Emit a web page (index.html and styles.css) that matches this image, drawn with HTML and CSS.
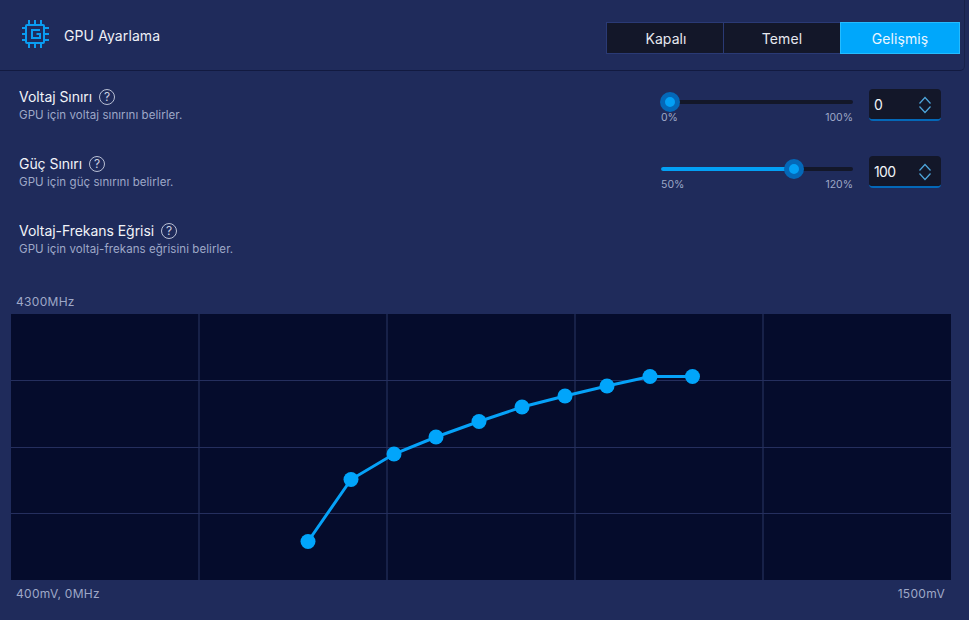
FILE: index.html
```html
<!DOCTYPE html>
<html lang="tr">
<head>
<meta charset="utf-8">
<title>GPU Ayarlama</title>
<link rel="stylesheet" href="styles.css">
</head>
<body>
<header class="head">
  <div class="head-title">
    <svg class="chip" width="30" height="30" viewBox="0 0 30 30" fill="none" stroke="#0a9df2" stroke-width="2">
      <rect x="5" y="5" width="18" height="18" rx="1"/>
      <path d="M8 0v4M14 0v4M20 0v4M8 24v4M14 24v4M20 24v4M1 8h3M1 14h3M1 20h3M24 8h4M24 14h4M24 20h4"/>
      <path d="M19 10H11V18H19V14H15.500"/>
    </svg>
    <span>GPU Ayarlama</span>
  </div>
  <div class="tabs">
    <div class="tab first">Kapalı</div>
    <div class="tab">Temel</div>
    <div class="tab active">Gelişmiş</div>
  </div>
</header>
<main class="body">
  <section class="row">
    <div class="info">
      <div class="label">Voltaj Sınırı <span class="help">?</span></div>
      <div class="desc">GPU için voltaj sınırını belirler.</div>
    </div>
    <div class="ctrl">
      <div class="slider">
        <div class="track"><div class="fill" style="width:0"></div><div class="knob" style="left:-1px"></div></div>
        <div class="ends"><span>0%</span><span>100%</span></div>
      </div>
      <div class="spin"><span>0</span>
        <svg class="arrows" width="12" height="18" viewBox="0 0 12 18" fill="none" stroke="#4ea6dc" stroke-width="1.200"><path d="M.5 7.500L6 1.500l5.500 6M.5 10.500L6 16.500l5.500-6"/></svg>
      </div>
    </div>
  </section>
  <section class="row">
    <div class="info">
      <div class="label">Güç Sınırı <span class="help">?</span></div>
      <div class="desc">GPU için güç sınırını belirler.</div>
    </div>
    <div class="ctrl">
      <div class="slider">
        <div class="track"><div class="fill" style="width:133px"></div><div class="knob" style="left:123px"></div></div>
        <div class="ends"><span>50%</span><span>120%</span></div>
      </div>
      <div class="spin"><span>100</span>
        <svg class="arrows" width="12" height="18" viewBox="0 0 12 18" fill="none" stroke="#4ea6dc" stroke-width="1.200"><path d="M.5 7.500L6 1.500l5.500 6M.5 10.500L6 16.500l5.500-6"/></svg>
      </div>
    </div>
  </section>
  <section class="row">
    <div class="info">
      <div class="label">Voltaj-Frekans Eğrisi <span class="help">?</span></div>
      <div class="desc">GPU için voltaj-frekans eğrisini belirler.</div>
    </div>
  </section>
  <section class="curve">
    <div class="axis top">4300MHz</div>
    <svg class="plot" width="940" height="266" viewBox="0 0 940 266">
      <rect width="940" height="266" fill="#050c2c"/>
      <g stroke="#172148" stroke-width="2"><path d="M188 0v266M376 0v266M564 0v266M752 0v266"/></g>
      <g stroke="#252f5e" stroke-width="1"><path d="M0 66.500h940M0 133.500h940M0 199.500h940"/></g>
      <polyline fill="none" stroke="#06a2f8" stroke-width="3" points="297,227.500 340,165.500 383,140 425,123 468,107.500 511,93 554,82 596,72 639,62.500 681,62.500"/>
      <g fill="#01a5fb">
        <circle cx="297" cy="227.500" r="7.500"/><circle cx="340" cy="165.500" r="7.500"/><circle cx="383" cy="140" r="7.500"/><circle cx="425" cy="123" r="7.500"/><circle cx="468" cy="107.500" r="7.500"/><circle cx="511" cy="93" r="7.500"/><circle cx="554" cy="82" r="7.500"/><circle cx="596" cy="72" r="7.500"/><circle cx="639" cy="62.500" r="7.500"/><circle cx="681.500" cy="62.500" r="7.500"/>
      </g>
    </svg>
    <div class="axis bottom"><span>400mV, 0MHz</span><span>1500mV</span></div>
  </section>
</main>
</body>
</html>
```
FILE: styles.css
```css
* { box-sizing: border-box; }
html, body { margin: 0; height: 100%; }
body {
  width: 969px;
  height: 620px;
  overflow: hidden;
  background: #1f2b5b;
  color: #fff;
  font-family: Inter, "Liberation Sans", sans-serif;
}
.head {
  width: 965px;
  height: 71px;
  padding: 22px 4px 0 21px;
  border-bottom: 1px solid #121a40;
  border-right: 1px solid #18224a;
  border-bottom-right-radius: 5px;
  display: flex;
  justify-content: space-between;
  align-items: flex-start;
}
.head-title {
  display: flex;
  align-items: center;
  gap: 13px;
  font-size: 14px;
  letter-spacing: 0.1px;
  color: #eef0f6;
  height: 26px;
}
.tabs { display: flex; height: 32px; border: 1px solid #2a3a75; }
.tab {
  width: 117px;
  background: #131729;
  border-left: 1px solid #2a3a75;
  color: #e6e8ef;
  font-size: 14px;
  letter-spacing: 0.1px;
  display: flex;
  align-items: center;
  justify-content: center;
}
.tab.first { width: 116px; border-left: 0; padding-left: 2px; }
.tab.active { width: 120px; background: #00a7fb; border: 1px solid #25bcff; margin: -1px -1px -1px 0; height: 32px; color: #eaf6ff; }
.body { padding: 17px 28px 0 19px; }
.row {
  height: 67px;
  display: flex;
  justify-content: space-between;
  align-items: flex-start;
}
.label { font-size: 14px; line-height: 18px; letter-spacing: -0.05px; color: #f1f3f8; display: flex; align-items: center; gap: 7px; }
.help {
  width: 16px; height: 16px;
  border: 1px solid #b8bfd4;
  border-radius: 50%;
  font-size: 12px;
  line-height: 14px;
  text-align: center;
  color: #c9cee0;
  letter-spacing: 0;
}
.desc { font-size: 11.500px; line-height: 15px; margin-top: 2px; letter-spacing: 0.07px; color: #9ea8c7; }
.ctrl { display: flex; gap: 16px; align-items: flex-start; }
.slider { width: 192px; padding-top: 12px; }
.track { position: relative; height: 4px; background: #131729; border-radius: 2px; }
.fill { height: 4px; background: #03a0f5; border-radius: 2px; }
.knob {
  position: absolute;
  top: -8px;
  width: 20px; height: 20px;
  border-radius: 50%;
  background: #03a0f5;
  border: 5px solid #0468b8;
}
.ends { display: flex; justify-content: space-between; margin-top: 8px; font-size: 10.500px; line-height: 12px; color: #9ea8c7; }
.spin {
  width: 72px; height: 32px;
  margin-top: 1px;
  background: #131729;
  border-radius: 4px;
  border-bottom: 2px solid #0468b8;
  display: flex;
  justify-content: space-between;
  align-items: center;
  padding: 0 10px 0 5px;
  font-size: 14px;
  letter-spacing: -0.7px;
  color: #f1f3f8;
}
.arrows { margin-top: 2px; }
.curve { width: 940px; margin: 6px 0 0 -8px; }
.axis { font-size: 12px; line-height: 14px; color: #9ea8c7; padding: 0 5px; letter-spacing: 0.3px; }
.axis.top { margin-bottom: 5px; }
.axis.bottom { display: flex; justify-content: space-between; margin-top: 7px; padding-right: 6px; }
.plot { display: block; }
```
